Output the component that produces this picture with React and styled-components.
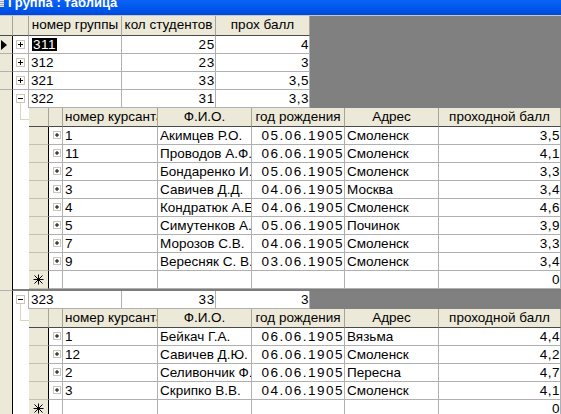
import React from 'react';
import styled, { createGlobalStyle } from 'styled-components';

const groups = [
  { id: '311', count: '25', avg: '4', current: true },
  { id: '312', count: '23', avg: '3' },
  { id: '321', count: '33', avg: '3,5' },
  {
    id: '322',
    count: '31',
    avg: '3,3',
    students: [
      ['1', 'Акимцев Р.О.', '05.06.1905', 'Смоленск', '3,5'],
      ['11', 'Проводов А.Ф.', '06.06.1905', 'Смоленск', '4,1'],
      ['2', 'Бондаренко И.', '05.06.1905', 'Смоленск', '3,3'],
      ['3', 'Савичев Д.Д.', '04.06.1905', 'Москва', '3,4'],
      ['4', 'Кондратюк А.Е', '04.06.1905', 'Смоленск', '4,6'],
      ['5', 'Симутенков А..', '05.06.1905', 'Починок', '3,9'],
      ['7', 'Морозов С.В.', '04.06.1905', 'Смоленск', '3,3'],
      ['9', 'Вересняк С. В.', '03.06.1905', 'Смоленск', '3,4'],
    ],
  },
  {
    id: '323',
    count: '33',
    avg: '3',
    students: [
      ['1', 'Бейкач Г.А.', '06.06.1905', 'Вязьма', '4,4'],
      ['12', 'Савичев Д.Ю.', '06.06.1905', 'Смоленск', '4,2'],
      ['2', 'Селивончик Ф.', '06.06.1905', 'Пересна', '4,7'],
      ['3', 'Скрипко В.В.', '04.06.1905', 'Смоленск', '4,1'],
    ],
  },
];

const mainCols = [
  { title: 'номер группы', w: 93 },
  { title: 'кол студентов', w: 94 },
  { title: 'прох балл', w: 94 },
];

// ls = letter spacing for numeric columns (the original font has wide digits)
const subCols = [
  { title: 'номер курсанта', w: 95, align: 'left', headAlign: 'left' },
  { title: 'Ф.И.О.', w: 94, align: 'left' },
  { title: 'год рождения', w: 93, align: 'right', ls: 1.5 },
  { title: 'Адрес', w: 94, align: 'left' },
  { title: 'проходной балл', align: 'right', ls: 0.5 },
];

const PlusBox = ({ size = 9, minus }) => (
  <svg width={size} height={size} viewBox={`0 0 ${size} ${size}`}>
    <rect x="0.5" y="0.5" width={size - 1} height={size - 1} fill="#fff" stroke="#cbc7b8" />
    <path d={`M2 ${size / 2}h${size - 4}`} stroke="#000" />
    {!minus && <path d={`M${size / 2} 2v${size - 4}`} stroke="#000" />}
  </svg>
);

const NewRecordStar = () => (
  <svg width="11" height="11" viewBox="0 0 11 11">
    <path d="M5.5 0.5v10M0.5 5.5h10M1.5 1.5l8 8M9.5 1.5l-8 8" stroke="#000" strokeWidth="1" />
  </svg>
);

const App = () => {
  return (
    <Window>
      <GlobalStyle />
      <TitleBar>
        <TitleIcon />
        <TitleText>Группа : таблица</TitleText>
      </TitleBar>
      <Sheet>
        <HeaderRow $h={20}>
          <HeadCell $w={13} />
          <HeadCell $w={16} />
          {mainCols.map((c) => (
            <HeadCell key={c.title} $w={c.w}>
              {c.title}
            </HeadCell>
          ))}
        </HeaderRow>

        {groups.map((g) => (
          <GroupBlock key={g.id}>
            <Selector>{g.current && <Pointer />}</Selector>
            <GroupBody>
              <Row>
                <ExpandCell $w={16} $open={!!g.students}>
                  <PlusBox minus={!!g.students} />
                  {g.students && <Stub />}
                </ExpandCell>
                <Cell $w={93}>{g.current ? <Highlight>{g.id}</Highlight> : g.id}</Cell>
                <Cell $w={94} $align="right" $ls={0.8}>
                  {g.count}
                </Cell>
                <Cell $w={94} $align="right" $ls={0.5}>
                  {g.avg}
                </Cell>
              </Row>

              {g.students && (
                <SubArea>
                  <TreeCol>
                    <Connector />
                  </TreeCol>
                  <SubSheet>
                    <HeaderRow $h={19}>
                      <HeadCell $w={20} />
                      <HeadCell $w={14} />
                      {subCols.map((c) => (
                        <HeadCell key={c.title} $w={c.w} $align={c.headAlign}>
                          {c.title}
                        </HeadCell>
                      ))}
                    </HeaderRow>
                    {g.students.map((s) => (
                      <Row key={s[0]}>
                        <SubSelector />
                        <ExpandCell $w={14} $shift={1}>
                          <PlusBox size={8} />
                        </ExpandCell>
                        {subCols.map((c, i) => (
                          <Cell key={c.title} $w={c.w} $align={c.align} $ls={c.ls}>
                            {s[i]}
                          </Cell>
                        ))}
                      </Row>
                    ))}
                    <Row>
                      <SubSelector>
                        <NewRecordStar />
                      </SubSelector>
                      <ExpandCell $w={14} />
                      {subCols.map((c, i) => (
                        <Cell key={c.title} $w={c.w} $align={c.align} $ls={c.ls}>
                          {i === 4 ? '0' : ''}
                        </Cell>
                      ))}
                    </Row>
                  </SubSheet>
                </SubArea>
              )}
            </GroupBody>
          </GroupBlock>
        ))}
      </Sheet>
    </Window>
  );
};

const GlobalStyle = createGlobalStyle`
  html, body {
    margin: 0;
    padding: 0;
    background: #808080;
  }
  body {
    font-family: "Liberation Sans", Arial, sans-serif;
    font-size: 13px;
    color: #000;
    overflow: hidden;
  }
`;

const Window = styled.div`
  width: 561px;
  height: 414px;
  overflow: hidden;
  background: #808080;
`;

const TitleBar = styled.div`
  display: flex;
  align-items: flex-start;
  height: 15px;
  overflow: hidden;
  background: linear-gradient(180deg, #0a62f6 0%, #0055ea 60%, #0049dc 100%);
  border-bottom: 1px solid #c9c7c0;
`;

const TitleIcon = styled.div`
  width: 4px;
  height: 7px;
  margin-right: 4px;
  background: repeating-linear-gradient(180deg, #e8e8e8 0 1px, #9aa4b8 1px 2px);
`;

const TitleText = styled.div`
  margin-top: -5px;
  color: #fff;
  font-weight: 700;
  font-size: 13px;
  line-height: 16px;
  white-space: nowrap;
`;

const Sheet = styled.div`
  display: flex;
  flex-direction: column;
`;

const HeaderRow = styled.div`
  display: flex;
  height: ${(p) => p.$h}px;
  flex-shrink: 0;
`;

const HeadCell = styled.div`
  box-sizing: border-box;
  ${(p) => (p.$w ? `width: ${p.$w}px; flex-shrink: 0;` : 'flex: 1;')}
  height: 100%;
  padding: 0 2px;
  background: #ece9d8;
  border-right: 1px solid #a7a598;
  border-bottom: 1px solid #4a4a4a;
  font-size: 13.5px;
  line-height: 18px;
  text-align: ${(p) => p.$align || 'center'};
  white-space: nowrap;
  overflow: hidden;
`;

const GroupBlock = styled.div`
  display: flex;
  flex-shrink: 0;
`;

const Selector = styled.div`
  box-sizing: border-box;
  width: 13px;
  flex-shrink: 0;
  padding: 4px 0 0 1px;
  background: #ece9d8;
  border-right: 1px solid #000;
  border-bottom: 1px solid #b0b0b0;
`;

const Pointer = styled.div`
  width: 0;
  height: 0;
  border-left: 6px solid #000;
  border-top: 5px solid transparent;
  border-bottom: 5px solid transparent;
`;

const GroupBody = styled.div`
  display: flex;
  flex-direction: column;
  flex: 1;
`;

const Row = styled.div`
  display: flex;
  height: 18px;
  flex-shrink: 0;
`;

const Cell = styled.div`
  box-sizing: border-box;
  ${(p) => (p.$w ? `width: ${p.$w}px; flex-shrink: 0;` : 'flex: 1;')}
  height: 18px;
  padding: 0 ${(p) => (p.$ls ? 0 : 2)}px 0 2px;
  background: #fff;
  border-right: 1px solid #b0b0b0;
  border-bottom: 1px solid #b0b0b0;
  font-size: 13.5px;
  letter-spacing: ${(p) => p.$ls || 0}px;
  line-height: 18px;
  text-align: ${(p) => p.$align || 'left'};
  white-space: nowrap;
  overflow: hidden;
`;

const Highlight = styled.span`
  display: inline-block;
  margin-left: 1px;
  padding: 0 1px;
  line-height: 13px;
  letter-spacing: 0.5px;
  background: #000;
  color: #fff;
`;

const ExpandCell = styled.div`
  box-sizing: border-box;
  display: flex;
  flex-direction: column;
  align-items: center;
  width: ${(p) => p.$w}px;
  flex-shrink: 0;
  height: 18px;
  padding: 4px 0 0 ${(p) => (p.$shift || 0) * 2}px;
  background: #fff;
  border-right: 1px solid #b0b0b0;
  border-bottom: ${(p) => (p.$open ? 'none' : '1px solid #b0b0b0')};
  svg {
    display: block;
    flex-shrink: 0;
  }
`;

const Stub = styled.div`
  width: 1px;
  flex: 1;
  margin-right: 1px;
  background: #d9d5bf;
`;

const SubArea = styled.div`
  display: flex;
  border-bottom: 2px solid #7c7c7c;
`;

const TreeCol = styled.div`
  width: 16px;
  flex-shrink: 0;
  background: #fff;
`;

const Connector = styled.div`
  box-sizing: border-box;
  width: 9px;
  height: 12px;
  margin-left: 7px;
  border-left: 1px solid #d9d5bf;
  border-bottom: 1px solid #d9d5bf;
`;

const SubSheet = styled.div`
  display: flex;
  flex-direction: column;
  flex: 1;
`;

const SubSelector = styled.div`
  box-sizing: border-box;
  display: flex;
  align-items: center;
  justify-content: center;
  width: 20px;
  flex-shrink: 0;
  height: 18px;
  background: #ece9d8;
  border-right: 1px solid #000;
  border-bottom: 1px solid #c4c1b4;
`;

export default App;
